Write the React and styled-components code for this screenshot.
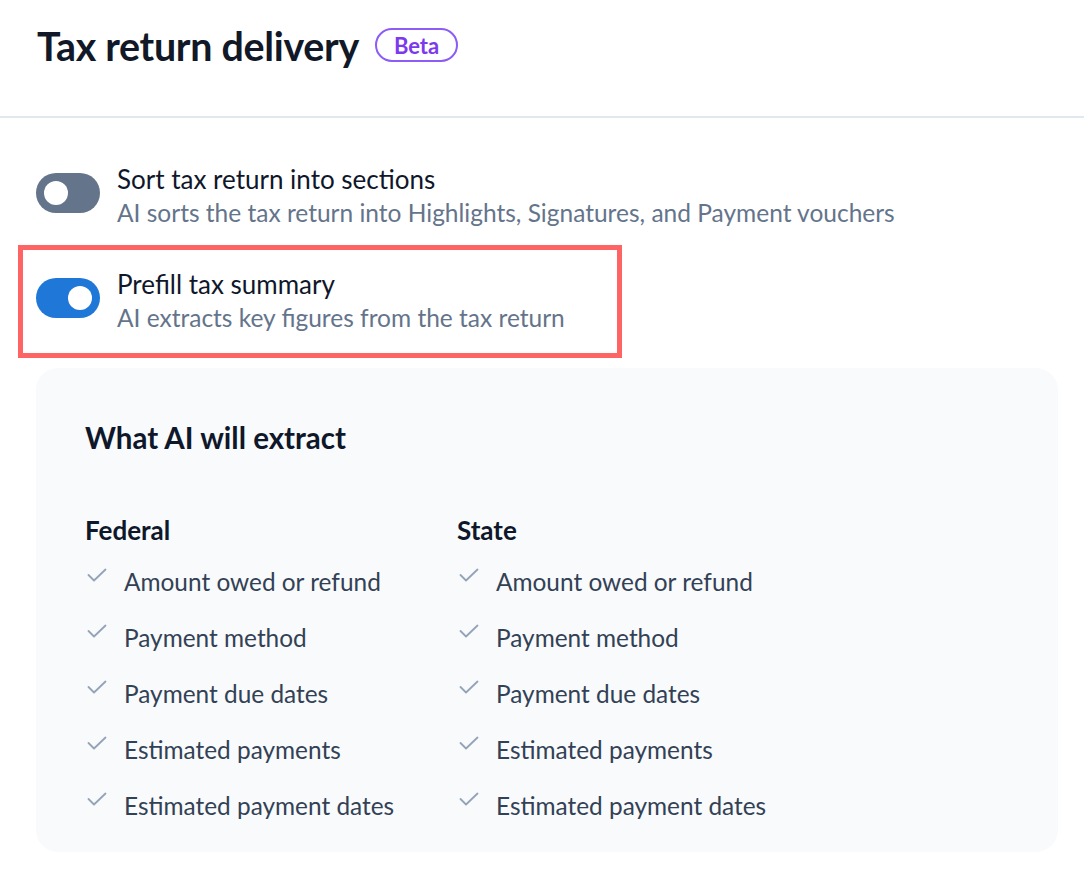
import React from "react";
import styled, { createGlobalStyle } from "styled-components";

const GlobalStyle = createGlobalStyle`
  body {
    margin: 0;
    background: #ffffff;
    font-family: Lato, "Liberation Sans", sans-serif;
    color: #0f172a;
  }
`;

const federal = [
  "Amount owed or refund",
  "Payment method",
  "Payment due dates",
  "Estimated payments",
  "Estimated payment dates",
];

const CheckIcon = () => (
  <svg width="20" height="16" viewBox="0 0 20 16" fill="none">
    <polyline
      points="1.5,7 7,12.5 18.5,1.5"
      stroke="#94a3b8"
      strokeWidth="1.8"
      strokeLinecap="round"
      strokeLinejoin="round"
    />
  </svg>
);

const Toggle = ({ on }) => (
  <Switch on={on}>
    <Knob on={on} />
  </Switch>
);

const SettingRow = ({ on, title, description }) => (
  <Row>
    <Toggle on={on} />
    <RowText>
      <RowTitle>{title}</RowTitle>
      <RowDesc>{description}</RowDesc>
    </RowText>
  </Row>
);

const ExtractColumn = ({ title, items }) => (
  <Column>
    <ColumnTitle>{title}</ColumnTitle>
    <List>
      {items.map((item) => (
        <Item key={item}>
          <CheckIcon />
          <span>{item}</span>
        </Item>
      ))}
    </List>
  </Column>
);

const App = () => {
  return (
    <Page>
      <GlobalStyle />
      <Header>
        <Title>Tax return delivery</Title>
        <Badge>Beta</Badge>
      </Header>

      <Body>
        <PlainRow>
          <SettingRow
            on={false}
            title="Sort tax return into sections"
            description="AI sorts the tax return into Highlights, Signatures, and Payment vouchers"
          />
        </PlainRow>

        <Highlight>
          <SettingRow
            on
            title="Prefill tax summary"
            description="AI extracts key figures from the tax return"
          />
        </Highlight>

        <Card>
          <CardTitle>What AI will extract</CardTitle>
          <Columns>
            <ExtractColumn title="Federal" items={federal} />
            <ExtractColumn title="State" items={federal} />
          </Columns>
        </Card>
      </Body>
    </Page>
  );
};

const Page = styled.div`
  width: 1084px;
  min-height: 878px;
  background: #ffffff;
`;

const Header = styled.header`
  display: flex;
  align-items: center;
  gap: 16px;
  height: 118px;
  padding: 0 37px 26px 37px;
  box-sizing: border-box;
  border-bottom: 2px solid #e2e8f0;
`;

const Title = styled.h1`
  margin: 0;
  font-size: 39.4px;
  font-weight: 700;
  color: #111827;
  letter-spacing: -0.3px;
`;

const Badge = styled.span`
  display: inline-flex;
  align-items: center;
  height: 34px;
  padding: 0 17px;
  box-sizing: border-box;
  border: 2px solid #8b5cf6;
  border-radius: 17px;
  color: #7c3aed;
  font-size: 22px;
  font-weight: 700;
`;

const Body = styled.div`
  padding: 44px 18px 24px 18px;
`;

const PlainRow = styled.div`
  padding: 0 18px 15px 18px;
`;

const Highlight = styled.div`
  width: 604px;
  box-sizing: border-box;
  border: 5px solid #ff6464;
  padding: 17px 13px 18px 13px;
`;

const Row = styled.div`
  display: flex;
  align-items: flex-start;
  gap: 17px;
`;

const Switch = styled.div`
  flex: none;
  display: flex;
  align-items: center;
  justify-content: ${({ on }) => (on ? "flex-end" : "flex-start")};
  width: 64px;
  height: 40px;
  margin-top: 11px;
  padding: 0 8px;
  box-sizing: border-box;
  border-radius: 20px;
  background: ${({ on }) => (on ? "#1f78d7" : "#64748b")};
`;

const Knob = styled.div`
  width: 24px;
  height: 24px;
  border-radius: 50%;
  background: #ffffff;
`;

const RowText = styled.div`
  display: flex;
  flex-direction: column;
`;

const RowTitle = styled.div`
  font-size: 26px;
  line-height: 34px;
  color: #0f172a;
`;

const RowDesc = styled.div`
  font-size: 24.5px;
  line-height: 34px;
  color: #64748b;
`;

const Card = styled.div`
  margin: 10px 8px 0 18px;
  padding: 53px 48px 30px 49px;
  background: #f8fafc;
  border-radius: 22px;
`;

const CardTitle = styled.h2`
  margin: 0;
  font-size: 29.5px;
  line-height: 34px;
  font-weight: 700;
  color: #0f172a;
`;

const Columns = styled.div`
  display: grid;
  grid-template-columns: 372px 372px;
  margin-top: 59px;
`;

const Column = styled.div`
  display: flex;
  flex-direction: column;
`;

const ColumnTitle = styled.h3`
  margin: 0;
  font-size: 26px;
  line-height: 32px;
  font-weight: 700;
  color: #0f172a;
`;

const List = styled.ul`
  list-style: none;
  margin: 18px 0 0 0;
  padding: 0;
  display: flex;
  flex-direction: column;
  gap: 22px;
`;

const Item = styled.li`
  display: flex;
  align-items: center;
  gap: 17px;
  height: 34px;
  padding-left: 2px;
  font-size: 24.4px;
  color: #334155;

  svg {
    flex: none;
    margin-top: -10px;
  }
`;

export default App;
